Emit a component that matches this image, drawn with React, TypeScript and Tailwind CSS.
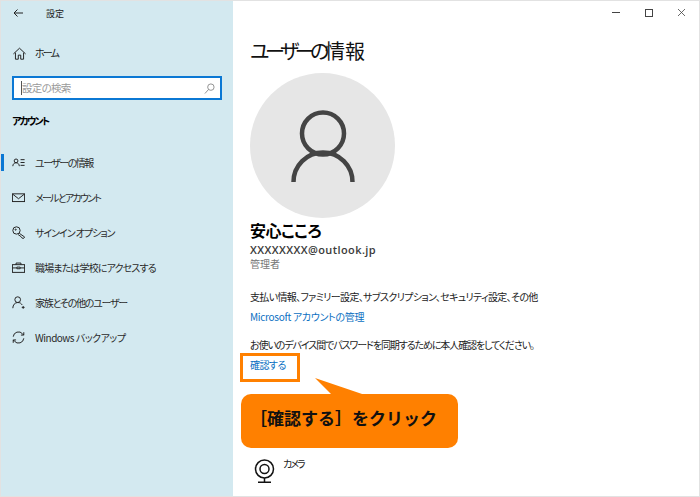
import React from "react";

const font = "[font-family:'Noto_Sans_CJK_JP','Noto_Sans',sans-serif]";

function Ico({ children }: { children: React.ReactNode }) {
  return (
    <svg width="13" height="13" viewBox="0 0 16 16" fill="none" stroke="#222" strokeWidth="1.200" className="shrink-0">
      {children}
    </svg>
  );
}

const items: { label: string; track: string; icon: React.ReactNode; active?: boolean }[] = [
  {
    label: "ユーザーの情報",
    track: "tracking-[-1.550px]",
    active: true,
    icon: (
      <Ico>
        <circle cx="5" cy="6" r="2.3" />
        <path d="M1 12.500c0-2.500 1.800-4.200 4-4.200s4 1.700 4 4.200" />
        <path d="M10.500 4.500h5M10.500 8h5M10.500 11.500h5" />
      </Ico>
    ),
  },
  {
    label: "メールとアカウント",
    track: "tracking-[-1.750px]",
    icon: (
      <Ico>
        <rect x="0.500" y="3.500" width="15" height="9.500" />
        <path d="M1 4l7 5.500L15 4" />
      </Ico>
    ),
  },
  {
    label: "サインイン オプション",
    track: "tracking-[-1.050px]",
    icon: (
      <Ico>
        <circle cx="5.500" cy="5.500" r="4.500" />
        <circle cx="4.500" cy="4.500" r="0.700" />
        <path d="M9 9l6.500 4.500-1.500 2-2-1-1-1.500-3.500-2.500" />
      </Ico>
    ),
  },
  {
    label: "職場または学校にアクセスする",
    track: "tracking-[-0.850px]",
    icon: (
      <Ico>
        <rect x="0.500" y="4.500" width="15" height="9.500" />
        <path d="M5 4.500V2.500h6v2M0.500 8.500h5.500M10 8.500h5.500M6 7.500h4v2H6z" />
      </Ico>
    ),
  },
  {
    label: "家族とその他のユーザー",
    track: "tracking-[-1.250px]",
    icon: (
      <Ico>
        <circle cx="7" cy="4.500" r="3.500" />
        <path d="M1 15c0-3.800 2.500-7 6-7s4.500 1.500 5.500 3" />
        <path d="M12 14h3.500M13.750 12.250v3.500" />
      </Ico>
    ),
  },
  {
    label: "Windows バックアップ",
    track: "tracking-[-0.500px]",
    icon: (
      <Ico>
        <path d="M1.500 7a6.500 6.500 0 0 1 11.500-3.500L14.500 5M14.500 1.500V5H11" />
        <path d="M14.500 9a6.500 6.500 0 0 1-11.500 3.500L1.500 11M1.500 14.500V11H5" />
      </Ico>
    ),
  },
];

export default function App() {
  return (
    <div className={`${font} relative w-[700px] h-[497px] overflow-hidden bg-white flex border border-[#e2e2e2] text-[#1a1a1a] [font-feature-settings:'palt']`}>
      {/* Sidebar */}
      <aside className="w-[232px] shrink-0 bg-[#d3e9f0] flex flex-col">
        <div className="h-[22px] flex items-center pl-[12px] mt-[1px]">
          <svg width="10" height="10" viewBox="0 0 10 10" fill="none" stroke="#222" strokeWidth="1">
            <path d="M10 5H1M4.500 1.500L1 5l3.500 3.500" />
          </svg>
          <span className="ml-[23px] text-[9px] leading-none">設定</span>
        </div>
        <div className="h-[36px] mt-[11px] flex items-center pl-[12px]">
          <Ico>
            <path d="M0.500 8.500L8 1.500l7.500 7" />
            <path d="M3 7v8h3.500V10h3v5H13V7" />
          </Ico>
          <span className="ml-[9px] text-[10px] tracking-[-1.850px] leading-none">ホーム</span>
        </div>
        <div className="mx-[11px] mt-[5px] h-[24px] border-2 border-[#0b78d4] bg-white flex items-center pr-[5px]">
          <span className="w-px h-[14px] ml-[7px] bg-[#555]" />
          <span className="text-[10.500px] tracking-[-0.700px] text-[#9a9a9a] leading-none flex-1">設定の検索</span>
          <svg width="11" height="11" viewBox="0 0 12 12" fill="none" stroke="#8a8a8a" strokeWidth="1">
            <circle cx="7.500" cy="4.500" r="3.500" />
            <path d="M5 7l-4 4.500" />
          </svg>
        </div>
        <div className="mt-[11px] pl-[11px] h-[20px] flex items-center text-[10px] tracking-[-1.850px] font-bold leading-none text-black">アカウント</div>
        <nav className="mt-[14px] flex flex-col">
          {items.map((it) => (
            <div key={it.label} className="relative h-[35px] flex items-center pl-[11px]">
              {it.active && <span className="absolute left-0 top-[9px] h-[17px] w-[3px] bg-[#0b78d4]" />}
              {it.icon}
              <span className={`ml-[10px] text-[10px] leading-none whitespace-nowrap text-[#2a2a2a] ${it.track}`}>{it.label}</span>
            </div>
          ))}
        </nav>
      </aside>

      {/* Main */}
      <main className="flex-1 relative pl-[17px] flex flex-col">
        <div className="absolute top-0 right-[1px] flex items-center h-[23px]">
          <div className="w-[33px] flex justify-center">
            <span className="w-[8px] h-px bg-[#444]" />
          </div>
          <div className="w-[33px] flex justify-center">
            <span className="w-[8px] h-[8px] border border-[#444]" />
          </div>
          <div className="w-[33px] flex justify-center">
            <svg width="9" height="9" viewBox="0 0 9 9" stroke="#444" strokeWidth="0.800">
              <path d="M1 1l7 7M8 1l-7 7" />
            </svg>
          </div>
        </div>

        <h1 className="mt-[36px] h-[28px] text-[20px] leading-[28px] font-normal text-[#111] whitespace-nowrap">
          <span className="tracking-[-4.400px]">ユーザーの</span>
          <span>情報</span>
        </h1>

        <div className="mt-[8px] w-[145px] h-[145px] rounded-full bg-[#e6e6e6] flex items-center justify-center">
          <svg width="64" height="72" viewBox="0 0 64 72" fill="none" stroke="#444" strokeWidth="4.500">
            <circle cx="32" cy="23.500" r="21" />
            <path d="M2.500 72A29.500 29.500 0 0 1 61.500 72" />
          </svg>
        </div>

        <div className="mt-[1px] text-[16px] leading-[22px] font-bold text-black tracking-[-0.400px]">安心こころ</div>
        <div className="mt-[2px] text-[11px] leading-[14px] font-semibold tracking-[0.400px] text-[#3a3a3a] [font-family:'Open_Sans',sans-serif]">XXXXXXXX@outlook.jp</div>
        <div className="text-[10px] leading-[13px] text-[#777]">管理者</div>

        <div className="mt-[19px] text-[10px] tracking-[-0.650px] leading-[16px] text-[#222] whitespace-nowrap">支払い情報、ファミリー設定、サブスクリプション、セキュリティ設定、その他</div>
        <div className="mt-[4px] text-[10px] tracking-[-0.300px] leading-[16px] text-[#0a6fc2]">Microsoft アカウントの管理</div>
        <div className="mt-[12px] text-[10px] tracking-[-1.100px] leading-[16px] text-[#222] whitespace-nowrap">お使いのデバイス間でパスワードを同期するために本人確認をしてください。</div>
        <div className="mt-[4px] text-[10px] tracking-[-0.550px] leading-[16px] text-[#0a6fc2]">確認する</div>

        <div className="mt-[86px] flex items-start gap-[8px] pl-[4px]">
          <svg width="21" height="24" viewBox="0 0 21 24" fill="none" stroke="#111" strokeWidth="1.500">
            <circle cx="10.500" cy="10" r="9" />
            <circle cx="10.500" cy="10" r="4.500" />
            <path d="M10.500 19v4M4 23.250h13" />
          </svg>
          <span className="text-[10px] leading-[10px] tracking-[-2px] text-[#222]">カメラ</span>
        </div>

        {/* Annotations */}
        <div className="absolute left-[7px] top-[352px] w-[60px] h-[29px] border-[3px] border-[#ff8000]" />
        <div className="absolute left-[8px] top-[393px] w-[217px] h-[54px] rounded-[10px] bg-[#ff8000] flex items-center pl-[9px] pb-[6px] text-[17px] font-bold text-[#111] whitespace-nowrap [font-feature-settings:normal]">
          ［確認する］をクリック
        </div>
        <svg className="absolute left-[82px] top-[377px]" width="50" height="18" viewBox="0 0 50 18" fill="#ff8000">
          <path d="M0 0L50 17H17z" />
        </svg>
      </main>
    </div>
  );
}
